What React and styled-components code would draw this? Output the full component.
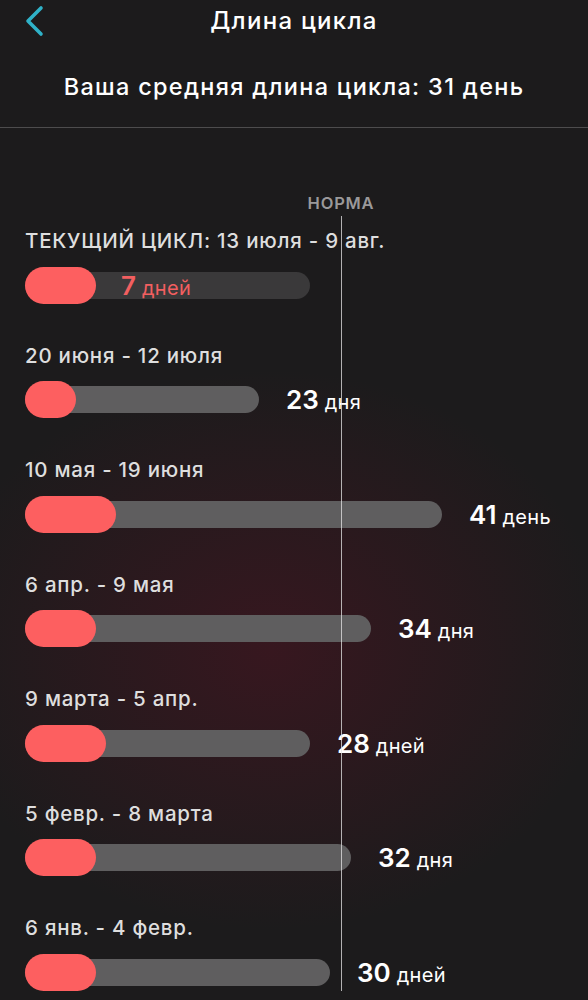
import styled, { createGlobalStyle } from "styled-components";

const GlobalStyle = createGlobalStyle`
    html, body {
        margin: 0;
        padding: 0;
        background: #1c1b1c;
        overflow: hidden;
    }
    * {
        box-sizing: border-box;
    }
`

const Screen = styled.div`
    position: relative;
    width: 588px;
    height: 1000px;
    overflow: hidden;
    font-family: Inter, "Noto Sans", "Liberation Sans", sans-serif;
    color: #ffffff;
    background:
        radial-gradient(ellipse 340px 280px at 270px 650px, rgba(62, 22, 32, 0.8), rgba(40, 24, 28, 0) 100%),
        #1c1b1c;
`

const NavBar = styled.div`
    display: grid;
    grid-template-columns: 80px 1fr 80px;
    align-items: center;
    height: 41px;
`

const BackButton = styled.button`
    display: flex;
    align-items: center;
    background: none;
    border: none;
    padding: 0 0 0 25px;
    height: 40px;
    cursor: pointer;
`

const Title = styled.h1`
    margin: 0;
    text-align: center;
    font-size: 24px;
    font-weight: 500;
    letter-spacing: 1.3px;
    line-height: 28px;
    color: #ffffff;
`

const Summary = styled.div`
    margin-top: 32px;
    padding-bottom: 26px;
    text-align: center;
    font-size: 23.5px;
    font-weight: 500;
    letter-spacing: 1.3px;
    line-height: 28px;
    border-bottom: 1px solid #4d4c4d;
`

const Chart = styled.div`
    position: relative;
    padding: 101px 0 0 25px;
    display: flex;
    flex-direction: column;
    gap: 40px;
`

const NormLabel = styled.span`
    position: absolute;
    left: 341px;
    top: 65px;
    transform: translateX(-50%);
    font-size: 16.5px;
    font-weight: 600;
    letter-spacing: 0.8px;
    color: #9a999a;
`

const NormLine = styled.div`
    position: absolute;
    left: 340.5px;
    top: 88px;
    bottom: 0;
    width: 1.5px;
    background: rgba(230, 230, 230, 0.75);
    z-index: 2;
`

const Cycle = styled.div`
    display: flex;
    flex-direction: column;
    gap: 13.5px;
`

const Dates = styled.div`
    font-size: 20.5px;
    font-weight: 500;
    letter-spacing: 0.75px;
    line-height: 24px;
    color: #dedede;
`

const BarRow = styled.div`
    display: flex;
    align-items: center;
    height: 37px;
`

const Track = styled.div`
    display: flex;
    align-items: center;
    height: 27px;
    border-radius: 14px;
    background: ${p => (p.$current ? "#3a393a" : "#5f5e5f")};
    flex-shrink: 0;
`

const Period = styled.div`
    height: 37px;
    border-radius: 19px;
    background: #fd5f60;
    flex-shrink: 0;
`

const Value = styled.div`
    display: flex;
    align-items: baseline;
    gap: 6px;
    margin-left: ${p => (p.$inside ? "25px" : "27px")};
    color: ${p => (p.$inside ? "#f25f60" : "#ffffff")};
    white-space: nowrap;
`

const Number = styled.span`
    font-size: 26px;
    font-weight: 600;
`

const Unit = styled.span`
    font-size: 20px;
    font-weight: 400;
    letter-spacing: 0.3px;
`

const cycles = [
    { dates: "ТЕКУЩИЙ ЦИКЛ: 13 июля - 9 авг.", track: 285, period: 71, days: 7, unit: "дней", current: true },
    { dates: "20 июня - 12 июля", track: 234, period: 51, days: 23, unit: "дня" },
    { dates: "10 мая - 19 июня", track: 417, period: 91, days: 41, unit: "день" },
    { dates: "6 апр. - 9 мая", track: 346, period: 71, days: 34, unit: "дня" },
    { dates: "9 марта - 5 апр.", track: 285, period: 81, days: 28, unit: "дней" },
    { dates: "5 февр. - 8 марта", track: 326, period: 71, days: 32, unit: "дня" },
    { dates: "6 янв. - 4 февр.", track: 305, period: 71, days: 30, unit: "дней" },
]

const App = () => {
    return (
        <>
            <GlobalStyle />
            <Screen>
                <NavBar>
                    <BackButton aria-label="Назад">
                        <svg width="19" height="32" viewBox="0 0 19 32">
                            <path d="M16 3 L3 16 L16 29" fill="none" stroke="#2fb2c8" strokeWidth="3.6" strokeLinecap="round" strokeLinejoin="round" />
                        </svg>
                    </BackButton>
                    <Title>Длина цикла</Title>
                    <div />
                </NavBar>
                <Summary>Ваша средняя длина цикла: 31 день</Summary>
                <Chart>
                    <NormLabel>НОРМА</NormLabel>
                    <NormLine />
                    {cycles.map(c => (
                        <Cycle key={c.dates}>
                            <Dates>{c.dates}</Dates>
                            <BarRow>
                                <Track $current={c.current} style={{ width: c.track }}>
                                    <Period style={{ width: c.period }} />
                                    {c.current && (
                                        <Value $inside>
                                            <Number>{c.days}</Number>
                                            <Unit>{c.unit}</Unit>
                                        </Value>
                                    )}
                                </Track>
                                {!c.current && (
                                    <Value>
                                        <Number>{c.days}</Number>
                                        <Unit>{c.unit}</Unit>
                                    </Value>
                                )}
                            </BarRow>
                        </Cycle>
                    ))}
                </Chart>
            </Screen>
        </>
    );
}

export default App;
